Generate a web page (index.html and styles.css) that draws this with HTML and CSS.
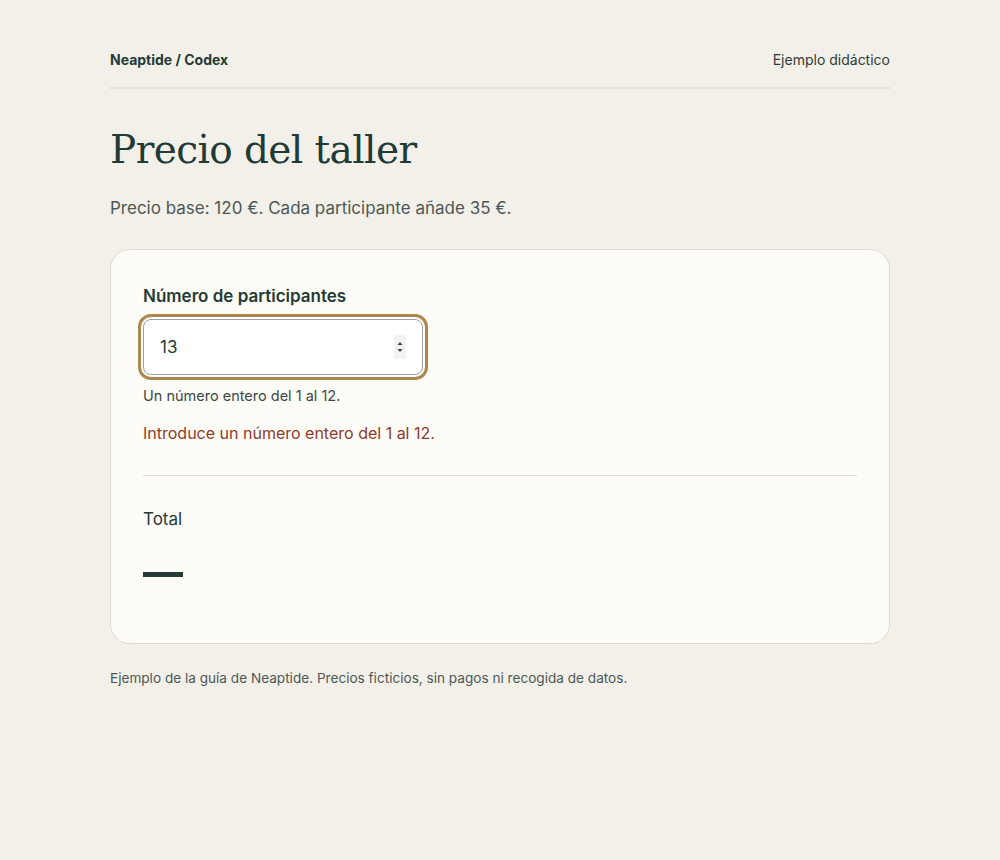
FILE: index.html
```html
<!DOCTYPE html>
<html lang="es">
<head>
<meta charset="utf-8">
<title>Precio del taller</title>
<link rel="stylesheet" href="styles.css">
</head>
<body>
<div class="page">
  <header class="topbar">
    <span class="brand">Neaptide / Codex</span>
    <span class="tag">Ejemplo didáctico</span>
  </header>
  <h1 class="title">Precio del taller</h1>
  <p class="lead">Precio base: 120 €. Cada participante añade 35 €.</p>
  <section class="card">
    <label class="label">Número de participantes</label>
    <div class="field">
      <span class="value">13</span>
      <span class="spin"><svg width="10" height="20" viewBox="0 0 10 20"><path d="M2.5 8 L5 5 L7.5 8 Z" fill="#444"/><path d="M2.5 12 L5 15 L7.5 12 Z" fill="#444"/></svg></span>
    </div>
    <p class="hint">Un número entero del 1 al 12.</p>
    <p class="error">Introduce un número entero del 1 al 12.</p>
    <hr class="divider">
    <p class="total-label">Total</p>
    <div class="total-dash"></div>
  </section>
  <p class="footer">Ejemplo de la guía de Neaptide. Precios ficticios, sin pagos ni recogida de datos.</p>
</div>
</body>
</html>
```

FILE: styles.css
```css
html, body {
  margin: 0;
  padding: 0;
  background: #f3f0ea;
}
body {
  font-family: Inter, "Noto Sans", sans-serif;
  color: #243b36;
}
.page {
  width: 780px;
  margin: 0 auto;
  padding-top: 51px;
}
.topbar {
  display: flex;
  justify-content: space-between;
  align-items: center;
  font-size: 14px;
  padding-bottom: 19px;
  border-bottom: 2px solid #e4e1da;
}
.brand {
  font-weight: 700;
  color: #243b36;
}
.tag {
  color: #2f3b38;
}
.title {
  font-family: "DejaVu Serif", Georgia, serif;
  font-weight: 400;
  font-size: 39px;
  color: #223a35;
  margin: 38px 0 0;
  line-height: 1.2;
  letter-spacing: -0.6px;
}
.lead {
  font-size: 17px;
  color: #4c5856;
  margin: 24px 0 0;
}
.card {
  margin-top: 31px;
  background: #fdfcf7;
  border: 1px solid #dedbd4;
  border-radius: 20px;
  padding: 36px 32px 66px;
}
.label {
  display: block;
  font-size: 17px;
  font-weight: 600;
  color: #243b36;
}
.field {
  box-sizing: border-box;
  margin-top: 13px;
  width: 280px;
  height: 56px;
  display: flex;
  align-items: center;
  justify-content: space-between;
  background: #fff;
  border: 1px solid #9aa3a0;
  border-radius: 8px;
  padding: 0 16px 0 16px;
  outline: 3px solid #ad8650;
  outline-offset: 2px;
}
.value {
  font-size: 17px;
  color: #243b36;
}
.spin {
  display: flex;
  background: #f2f2f2;
  border-radius: 2px;
  padding: 2px 1px;
}
.hint {
  font-size: 14.5px;
  color: #3d4846;
  margin: 12px 0 0;
}
.error {
  font-size: 16px;
  color: #8e3b2c;
  margin: 19px 0 0;
}
.divider {
  border: none;
  border-top: 1px solid #e2dfd8;
  margin: 32px 0 0;
}
.total-label {
  font-size: 17px;
  color: #243b36;
  margin: 33px 0 0;
}
.total-dash {
  width: 40px;
  height: 5px;
  background: #243b36;
  margin-top: 43px;
}
.footer {
  font-size: 13.6px;
  color: #4c5856;
  margin: 26px 0 0;
}
```
